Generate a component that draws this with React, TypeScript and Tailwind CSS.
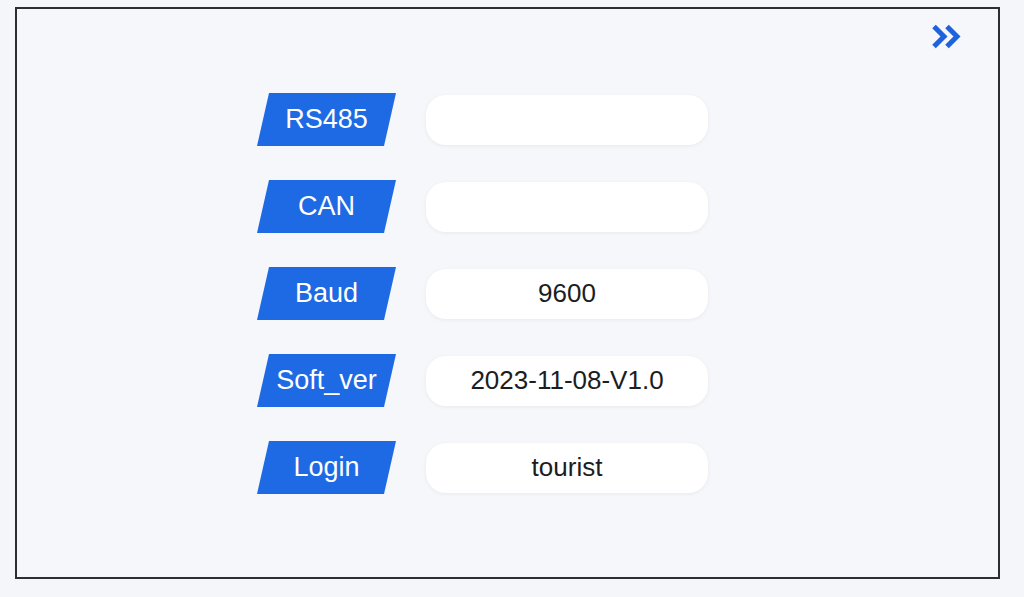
import React from 'react';

const rows = [
  { label: 'RS485', value: '' },
  { label: 'CAN', value: '' },
  { label: 'Baud', value: '9600' },
  { label: 'Soft_ver', value: '2023-11-08-V1.0' },
  { label: 'Login', value: 'tourist' },
];

const App = () => {
  return (
    <div className="w-[1024px] h-[597px] bg-[#f4f6f9] pt-[7px] pl-[15px] font-['Liberation_Sans',Arial,sans-serif]">
      <div className="relative w-[985px] h-[572px] border-2 border-[#2b2e33] bg-[#f5f7fa]">
        {/* next page */}
        <svg className="absolute left-[914px] top-[15px]" width="32" height="26" viewBox="0 0 32 26" fill="none">
          <polyline points="3,2.5 13,12.5 3,22.5" stroke="#1f63dc" strokeWidth="5" strokeLinejoin="miter" />
          <polyline points="16,2.5 26,12.5 16,22.5" stroke="#1f63dc" strokeWidth="5" strokeLinejoin="miter" />
        </svg>

        <div className="flex flex-col gap-[34px] pt-[84px] pl-[240px]">
          {rows.map((r) => (
            <div key={r.label} className="flex items-center gap-[30px]">
              <div className="w-[139px] h-[53px] bg-[#1e6ae4] text-white text-[27px] flex items-center justify-center [clip-path:polygon(12px_0,100%_0,calc(100%_-_12px)_100%,0_100%)]">
                {r.label}
              </div>
              <div className="w-[282px] h-[50px] rounded-[20px] bg-white shadow-[0_1px_4px_rgba(0,0,0,0.06)] flex items-center justify-center text-[26px] text-[#1b1d21]">
                {r.value}
              </div>
            </div>
          ))}
        </div>
      </div>
    </div>
  );
};

export default App;
